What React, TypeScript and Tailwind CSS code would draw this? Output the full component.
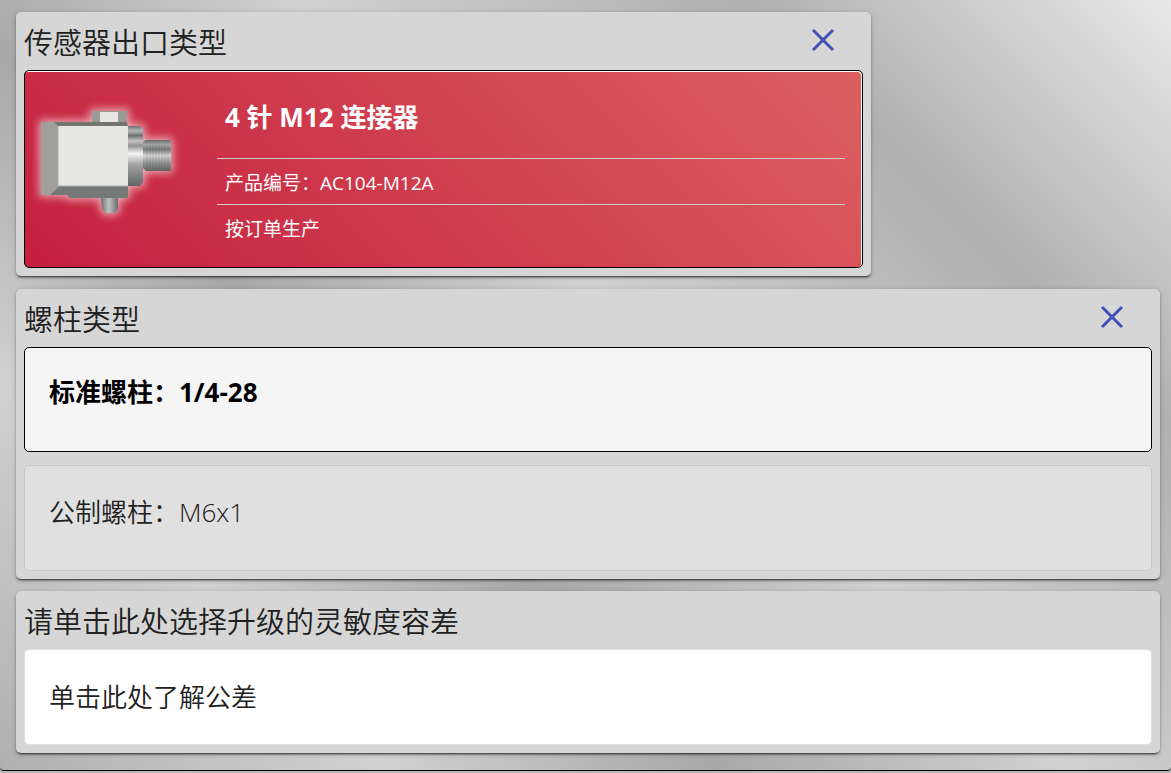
import React from 'react'
import type { ReactNode } from 'react'

const CloseIcon = () => (
  <svg width="24" height="24" viewBox="0 0 24 24" fill="none" stroke="#3f51b5" strokeWidth="3" aria-hidden="true">
    <path d="M2 2L22 22M22 2L2 22" />
  </svg>
)

const SensorImage = () => (
  <svg width="165" height="136" viewBox="0 0 165 136" className="shrink-0" role="img" aria-label="M12">
    <defs>
      <linearGradient id="ring" x1="0" y1="0" x2="0" y2="1">
        <stop offset="0" stopColor="#6f7372" />
        <stop offset="0.08" stopColor="#b5b7b6" />
        <stop offset="0.16" stopColor="#6f7372" />
        <stop offset="0.25" stopColor="#c3c4c3" />
        <stop offset="0.33" stopColor="#939594" />
        <stop offset="0.46" stopColor="#f4f4f4" />
        <stop offset="0.65" stopColor="#a0a2a1" />
        <stop offset="0.85" stopColor="#7b7f7e" />
        <stop offset="1" stopColor="#626665" />
      </linearGradient>
      <linearGradient id="thread" x1="0" y1="0" x2="0" y2="1">
        <stop offset="0" stopColor="#6b6e6d" />
        <stop offset="0.15" stopColor="#a9abaa" />
        <stop offset="0.3" stopColor="#777a79" />
        <stop offset="0.5" stopColor="#d5d6d5" />
        <stop offset="0.75" stopColor="#8d908f" />
        <stop offset="1" stopColor="#5f6362" />
      </linearGradient>
      <linearGradient id="pin" x1="0" y1="0" x2="1" y2="0">
        <stop offset="0" stopColor="#6b6f6e" />
        <stop offset="0.45" stopColor="#bfc1c0" />
        <stop offset="1" stopColor="#6b6f6e" />
      </linearGradient>
      <filter id="glow" x="-20%" y="-20%" width="140%" height="140%" colorInterpolationFilters="sRGB">
        <feMorphology in="SourceAlpha" operator="dilate" radius="2" result="wide" />
        <feGaussianBlur in="wide" stdDeviation="4" result="soft" />
        <feFlood floodColor="#ffffff" floodOpacity="0.6" />
        <feComposite in2="soft" operator="in" result="halo" />
        <feMerge>
          <feMergeNode in="halo" />
          <feMergeNode in="SourceGraphic" />
        </feMerge>
      </filter>
    </defs>
    <g filter="url(#glow)">
      <path d="M67 16H102V29H67z" fill="#9a9b97" />
      <path d="M75 17H93V27H75z" fill="#e6e6e4" />
      <path d="M16 27H102L103 32H34z" fill="#74746f" />
      <path d="M16 27H29L34 32V91L25 100H16z" fill="#a09f9a" />
      <path d="M34 91H103V103H45L42 100H25z" fill="#757977" />
      <path d="M33 31H103V91H33z" fill="#e7e7e5" />
      <path d="M33 31V91H103" fill="none" stroke="#aeafab" strokeWidth="1" />
      <path d="M103 31H115L118 34V87L115 91H103z" fill="url(#ring)" />
      <path d="M118 47L121 45H145L146 48V74L145 76H121L118 73z" fill="url(#thread)" />
      <path
        d="M122 46V75M125 46V75M128 46V75M131 46V75M134 46V75M137 46V75M140 46V75M143 46V75"
        stroke="#575b5a"
        strokeOpacity="0.25"
      />
      <path d="M76 103H93V114L90 118H80L77 114z" fill="url(#pin)" />
    </g>
  </svg>
)

type CardProps = {
  title: string
  closable?: boolean
  className?: string
  children: ReactNode
}

const Card = ({ title, closable, className = '', children }: CardProps) => (
  <section
    className={`rounded-[5px] bg-[#d6d6d6] p-2 shadow-[0_3px_1px_-2px_rgba(0,0,0,0.4),0_2px_2px_0_rgba(0,0,0,0.28),0_1px_5px_0_rgba(0,0,0,0.2)] ${className}`}
  >
    <div className="flex h-[50px] items-start justify-between">
      <h2 className="text-[29px] font-[350] leading-[46px]">{title}</h2>
      {closable && (
        <button type="button" aria-label="关闭" className="mr-7 mt-2">
          <CloseIcon />
        </button>
      )}
    </div>
    {children}
  </section>
)

const App = () => {
  return (
    <div className="bg-[#b8b8b8] pb-1 font-['Open_Sans','Noto_Sans_CJK_SC',sans-serif] text-[#212121]">
      <main className="rounded-b border-b border-black bg-[linear-gradient(45deg,#b0b0b0_0%,#d1d1d1_20%,#a8a8a8_37%,#d1d1d1_55%,#b0b0b0_78%,#e8e8e8_100%)] pb-[17px] pl-4 pr-[11px] pt-3">
        <Card title="传感器出口类型" closable className="w-[calc(75%-3px)]">
          <button
            type="button"
            className="flex w-full items-start rounded-[5px] border border-black bg-[linear-gradient(45deg,#c41f3e,#dc6060)] pb-[17px] pr-[17px] pt-6 text-left text-white shadow-[inset_-1px_1px_0_#ffffff]"
          >
            <SensorImage />
            <span className="ml-[27px] flex grow flex-col">
              <span className="h-[63px] px-2 text-[26px] font-bold leading-[44px]">4 针 M12 连接器</span>
              <span className="h-[46px] border-t border-[#cccccc] px-2 text-[19px] leading-[48px]">
                产品编号：AC104-M12A
              </span>
              <span className="h-[46px] border-t border-[#cccccc] px-2 text-[19px] leading-[48px]">按订单生产</span>
            </span>
          </button>
        </Card>

        <Card title="螺柱类型" closable className="mt-[13px]">
          <button
            type="button"
            className="block h-[105px] w-full rounded-[5px] border border-black bg-[#f5f5f5] px-6 pb-4 text-left text-[26px] font-bold leading-[88px] text-black"
          >
            标准螺柱：1/4-28
          </button>
          <button
            type="button"
            className="mt-[13px] block h-[106px] w-full rounded-[5px] border border-[#c8c8c8] bg-[#e0e0e0] px-6 pb-3 text-left text-[26px] font-[350] leading-[88px]"
          >
            公制螺柱：M6x1
          </button>
        </Card>

        <Card title="请单击此处选择升级的灵敏度容差" className="mt-3">
          <button
            type="button"
            className="block h-24 w-full rounded-[5px] border border-[#e0e0e0] bg-white px-6 text-left text-[26px] font-[350] leading-[88px]"
          >
            单击此处了解公差
          </button>
        </Card>
      </main>
    </div>
  )
}

export default App
